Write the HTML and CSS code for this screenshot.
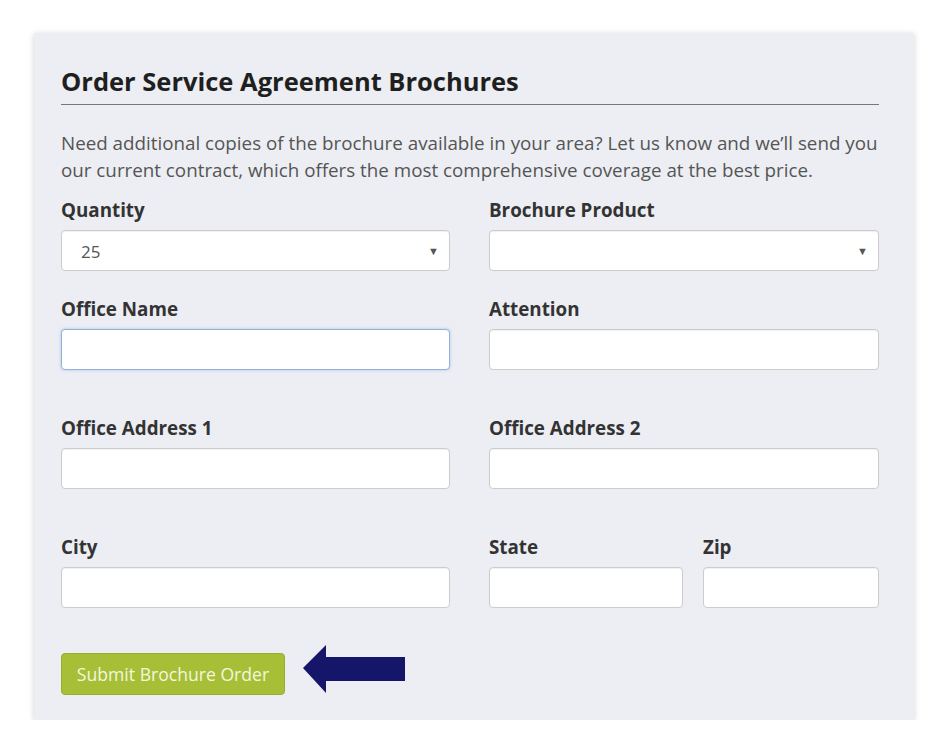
FILE: index.html
```html
<!DOCTYPE html>
<html>
<head>
<meta charset="utf-8">
<link rel="stylesheet" href="styles.css">
</head>
<body>
<div class="page">
  <div class="card">
    <h2 class="title">Order Service Agreement Brochures</h2>
    <p class="intro">Need additional copies of the brochure available in your area? Let us know and we’ll send you our current contract, which offers the most comprehensive coverage at the best price.</p>
    <div class="grid">
      <div class="field">
        <label class="label">Quantity</label>
        <div class="control select"><span class="value">25</span><span class="caret">▼</span></div>
      </div>
      <div class="field">
        <label class="label">Brochure Product</label>
        <div class="control select"><span class="value"></span><span class="caret">▼</span></div>
      </div>
      <div class="field">
        <label class="label">Office Name</label>
        <div class="control focus"></div>
      </div>
      <div class="field">
        <label class="label">Attention</label>
        <div class="control"></div>
      </div>
      <div class="field spaced">
        <label class="label">Office Address 1</label>
        <div class="control"></div>
      </div>
      <div class="field spaced">
        <label class="label">Office Address 2</label>
        <div class="control"></div>
      </div>
      <div class="field spaced">
        <label class="label">City</label>
        <div class="control"></div>
      </div>
      <div class="field spaced split">
        <div class="sub">
          <label class="label">State</label>
          <div class="control"></div>
        </div>
        <div class="sub">
          <label class="label">Zip</label>
          <div class="control"></div>
        </div>
      </div>
    </div>
    <div class="actions">
      <button class="btn">Submit Brochure Order</button>
      <svg class="arrow" width="104" height="50" viewBox="0 0 104 50"><polygon points="0,23 23,0 23,12 102,12 102,36 23,36 23,48" fill="#15166a"/></svg>
    </div>
  </div>
</div>
</body>
</html>
```
FILE: styles.css
```css
html, body { margin: 0; padding: 0; background: #fff; }
body { font-family: "Open Sans", "Liberation Sans", sans-serif; color: #333; }
.page { padding: 33px 36px 0 34px; }
.card {
  width: 880px;
  box-sizing: border-box;
  background: #eceef3;
  padding: 30px 35px 25px 27px;
  box-shadow: 0 1px 6px rgba(0,0,0,0.18);
}
.title {
  margin: 0;
  font-size: 25.5px;
  font-weight: 700;
  color: #1f1f1f;
  line-height: 36px;
  padding-bottom: 5px;
  border-bottom: 1px solid #777;
}
.intro {
  margin: 25px -8px 0 0;
  font-size: 18.8px;
  line-height: 27px;
  color: #555;
}
.grid {
  display: grid;
  grid-template-columns: 389px 390px;
  column-gap: 39px;
  margin-top: 15px;
}
.field { display: flex; flex-direction: column; }
.grid .field:nth-child(n+3) { margin-top: 27px; }
.grid .field.spaced { margin-top: 47px; }
.label {
  font-size: 18.8px;
  font-weight: 700;
  color: #333;
  line-height: 22px;
  margin-bottom: 9px;
}
.control {
  height: 41px;
  box-sizing: border-box;
  background: #fff;
  border: 1px solid #ccc;
  border-radius: 4px;
  box-shadow: inset 0 1px 1px rgba(0,0,0,0.06);
  display: flex;
  align-items: center;
  padding: 0 10px 0 19px;
}
.control.focus {
  border-color: #8fb3dc;
  box-shadow: 0 0 3px rgba(102,150,220,0.5);
}
.select .value { flex: 1; font-size: 17px; color: #555; padding-top: 2px; }
.select .caret { font-size: 11px; color: #555; }
.split { flex-direction: row; gap: 20px; }
.sub { display: flex; flex-direction: column; flex: 1; }
.sub:first-child { flex: 0 0 194px; }
.actions {
  display: flex;
  align-items: center;
  gap: 18px;
  margin-top: 45px;
}
.btn {
  width: 224px;
  height: 42px;
  background: #a7bf36;
  border: 1px solid #97ad2e;
  border-radius: 4px;
  color: #f3f6df;
  font-family: "Open Sans", "Liberation Sans", sans-serif;
  font-size: 17.6px;
  padding: 0;
}
.arrow { display: block; margin-top: -8px; }
```
